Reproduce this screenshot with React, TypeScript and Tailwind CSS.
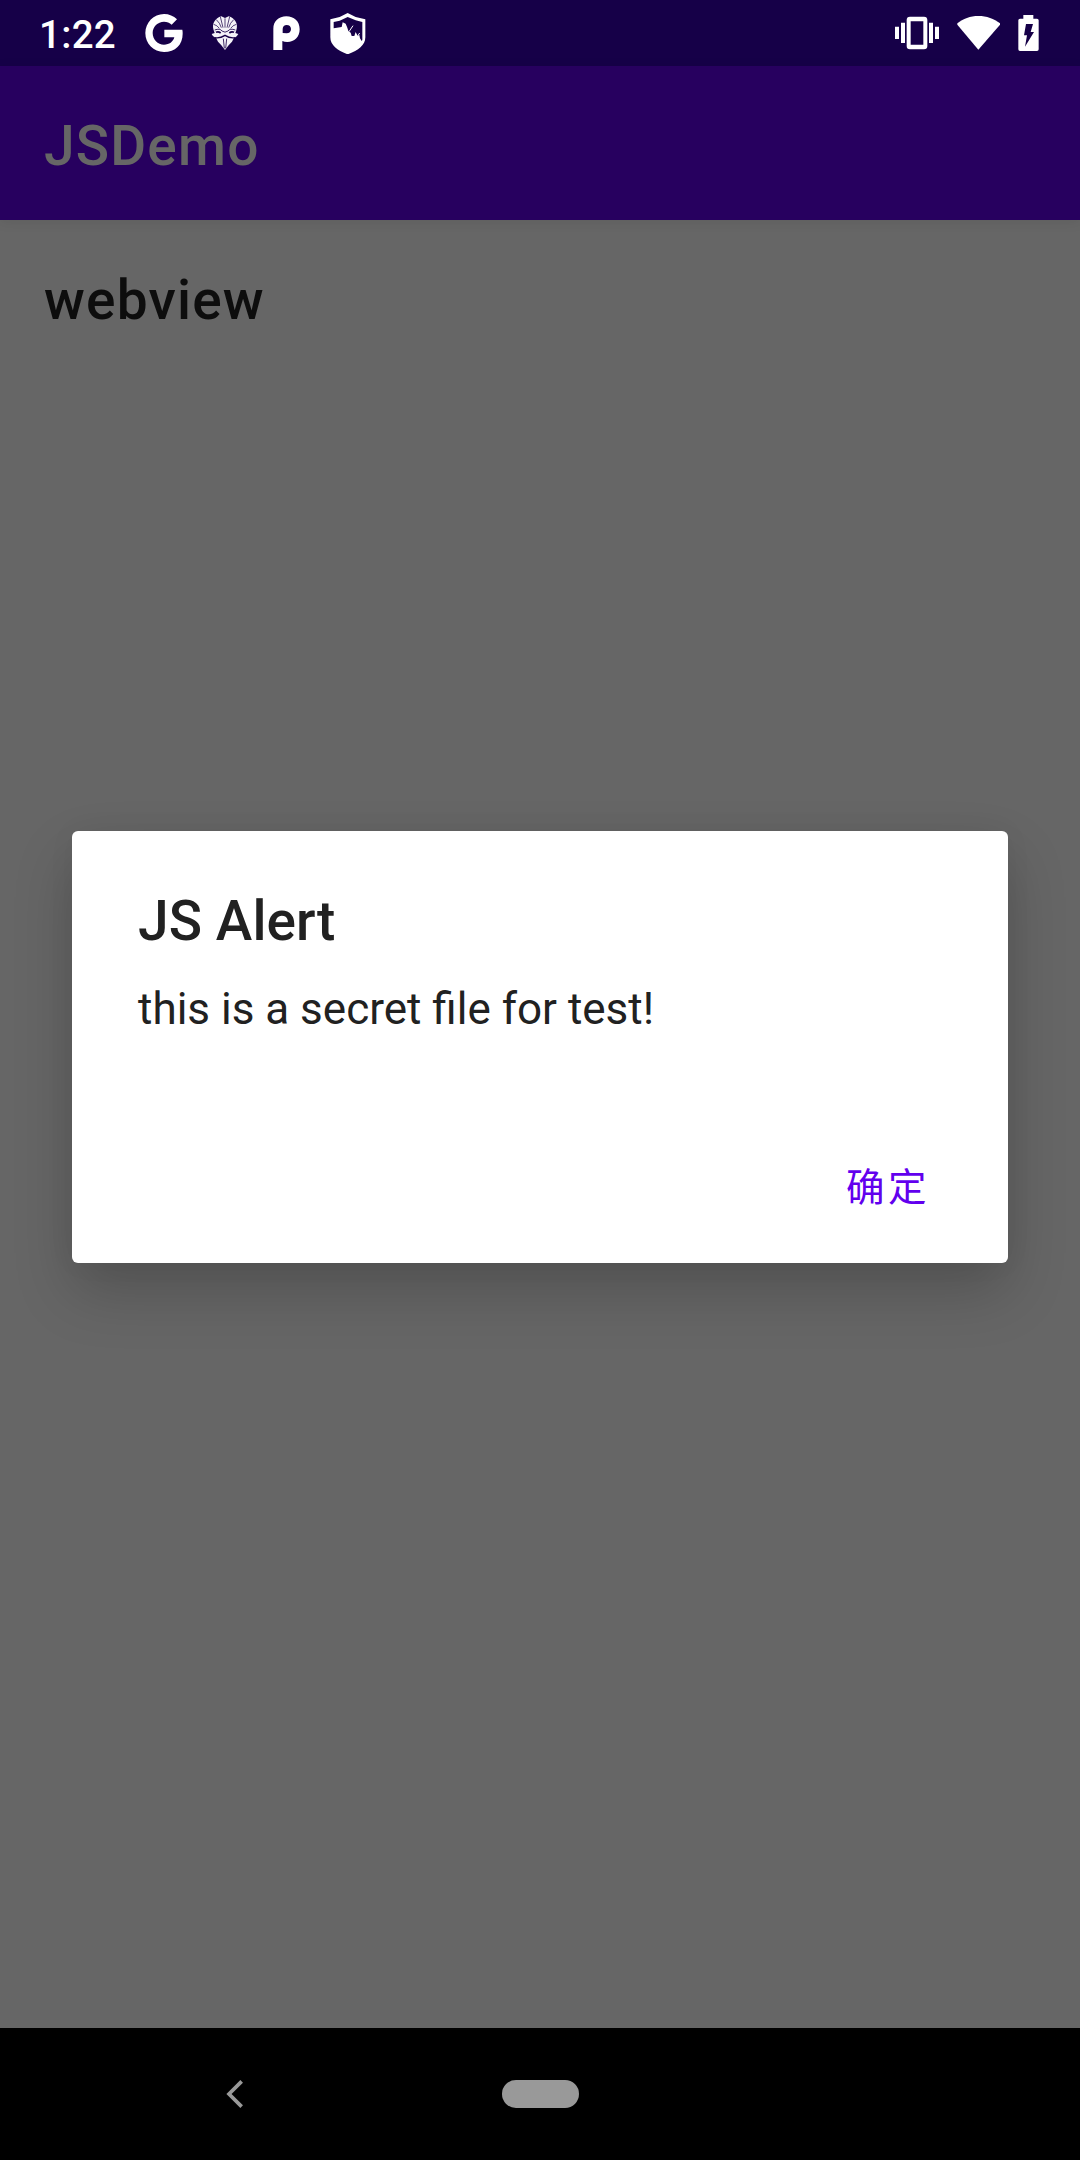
import React from "react";

function GoogleIcon() {
  return (
    <svg className="ml-[31px] h-[38px] w-[38px]" viewBox="375 42 114 114" fill="#fff">
      <path d="M471 58 L455 74 C449 68 441 65 432 65 C413 65 398 80 398 99 C398 118 413 134 432 134 C448 134 459 126 463 112 H433 V89 H487 C488 93 488 97 488 101 C488 134 466 156 432 156 C401 156 376 131 376 99 C376 68 401 42 432 42 C447 42 461 48 471 58 Z" />
    </svg>
  );
}

function MaskIcon() {
  return (
    <svg className="ml-[28px] h-[34px] w-[28px]" viewBox="65 49 84 102">
      <path
        fill="#f4f2f8"
        d="M73 92 C66 72 78 55 96 50 L107 55 L118 50 C136 55 148 72 141 92 L138 100 L147 103 C143 110 138 114 134 114 L128 126 L118 137 L107 151 L96 137 L86 126 L80 114 C75 113 70 110 67 103 L76 100 Z"
      />
      <g stroke="#180047" fill="none" strokeWidth="2.2">
        <path d="M107 56 V84 M93 51 L101 84 M121 51 L113 84 M81 60 Q92 70 96 84 M133 60 Q122 70 118 84 M73 74 Q84 77 90 86 M141 74 Q130 77 124 86" />
        <path d="M76 91 Q92 85 98 94 Q107 101 116 94 Q122 85 138 91" strokeWidth="2.5" />
        <path d="M80 98 Q87 94 94 100 M134 98 Q127 94 120 100" strokeWidth="5" />
        <path d="M76 114 Q92 117 107 107 Q122 117 138 114" strokeWidth="4" />
        <path d="M102 117 L105 146 M112 117 L109 146" strokeWidth="2.5" />
      </g>
    </svg>
  );
}

function ParkingIcon() {
  return (
    <svg className="ml-[34px] h-[34px] w-[27px]" viewBox="248 50 81 102" fill="#fff" fillRule="evenodd">
      <path d="M249 152 V88 C249 66 265 51 288 51 C311 51 328 66 328 90 C328 113 312 128 291 128 C285 128 280 127 276 125 V152 Z M277 101 V89 C277 82 282 77 289 77 C297 77 302 82 302 89 C302 97 297 102 289 102 Z" />
    </svg>
  );
}

function ShieldIcon() {
  return (
    <svg className="ml-[30px] h-[41px] w-[36px]" viewBox="89 38 108 123" fill="#fff">
      <path
        fillRule="evenodd"
        d="M142 38 L166 50 L195 57 V111 C195 136 172 151 142 162 C113 151 90 136 90 111 V57 L118 50 Z M142 50 L118 61 L100 65 V84 L124 80 L127 66 L136 70 L141 82 L144 92 L151 97 L154 107 H162 L166 95 L172 107 L177 104 L179 114 L184 122 L186 119 V65 L166 60 Z"
      />
      <path d="M146 94 L158 76 M172 107 L178 98" stroke="#fff" strokeWidth="3" />
    </svg>
  );
}

function VibrateIcon() {
  return (
    <svg className="h-[34px] w-[44px]" viewBox="45 48 132 102" fill="#fff">
      <path d="M45 80 h12 v37 h-12 Z M63 68 h12 v61 h-12 Z M147 68 h12 v61 h-12 Z M165 80 h12 v37 h-12 Z" />
      <path fillRule="evenodd" d="M90 50 H132 Q142 50 142 60 V138 Q142 148 132 148 H90 Q80 148 80 138 V60 Q80 50 90 50 Z M92 64 V134 H130 V64 Z" />
    </svg>
  );
}

function WifiIcon() {
  return (
    <svg className="ml-[18px] h-[34px] w-[43px]" viewBox="231 46 129 102" fill="#fff">
      <path d="M295 147 L232 72 V68 C249 54 271 46 295 46 C320 46 342 54 360 68 V72 Z" />
    </svg>
  );
}

function BatteryIcon() {
  return (
    <svg className="ml-[18px] h-[36px] w-[21px]" viewBox="416 45 63 108" fill="#fff" fillRule="evenodd">
      <path d="M432 45 H462 V56 H473 Q478 56 478 61 V148 Q478 153 473 153 H422 Q417 153 417 148 V61 Q417 56 422 56 H432 Z M440 72 L434 106 H443 L437 140 L464 96 H454 L461 72 Z" />
    </svg>
  );
}

function StatusBar() {
  return (
    <div className="flex h-[66px] items-center bg-[#160048] pr-[41px] pl-[39px]">
      <span className="w-[75px] pt-[4px] text-[38.5px] leading-none font-medium tracking-[0.3px] whitespace-nowrap text-white">1:22</span>
      <GoogleIcon />
      <MaskIcon />
      <ParkingIcon />
      <ShieldIcon />
      <div className="ml-auto flex items-center">
        <VibrateIcon />
        <WifiIcon />
        <BatteryIcon />
      </div>
    </div>
  );
}

function AlertDialog() {
  return (
    <div className="absolute top-[831px] left-[72px] flex h-[432px] w-[936px] flex-col rounded-[6px] bg-white px-[66px] text-[#212121] shadow-[0_28px_60px_rgba(0,0,0,0.2),0_0_30px_rgba(0,0,0,0.04)]">
      <h2 className="mt-[58px] text-[55px] leading-[64px] font-medium tracking-[0.1px]">JS Alert</h2>
      <p className="mt-[30px] text-[44px] leading-[52px]">this is a secret file for test!</p>
      <button className="mt-auto mr-[12px] mb-[47px] self-end font-['Roboto','Noto_Sans_CJK_SC',sans-serif] text-[38.5px] leading-[56px] tracking-[3.44px] text-[#6200ee]">
        确定
      </button>
    </div>
  );
}

export default function App() {
  return (
    <div className="relative flex h-[2160px] w-[1080px] flex-col overflow-hidden bg-[#666666] font-['Roboto','Noto_Sans_CJK_SC',sans-serif]">
      <StatusBar />
      <header className="flex h-[154px] items-center bg-[#27005f] px-[44px] pt-[5px] shadow-[0_2px_12px_rgba(0,0,0,0.08)]">
        <h1 className="text-[55px] leading-[64px] font-medium tracking-[1.2px] text-[#666666]">JSDemo</h1>
      </header>
      <main className="flex-1 px-[44px] pt-[48px]">
        <h2 className="text-[55px] leading-[64px] font-medium tracking-[1.2px] text-[#0d0d0d]">webview</h2>
      </main>
      <nav className="flex h-[132px] items-center bg-black">
        <svg className="ml-[226px] h-[28px] w-[18px]" viewBox="138 211 54 84" fill="none">
          <path d="M185 215 L147 253 L185 291" stroke="#999" strokeWidth="11" />
        </svg>
        <div className="ml-[258px] h-[28px] w-[77px] rounded-full bg-[#999999]" />
      </nav>
      <AlertDialog />
    </div>
  );
}
